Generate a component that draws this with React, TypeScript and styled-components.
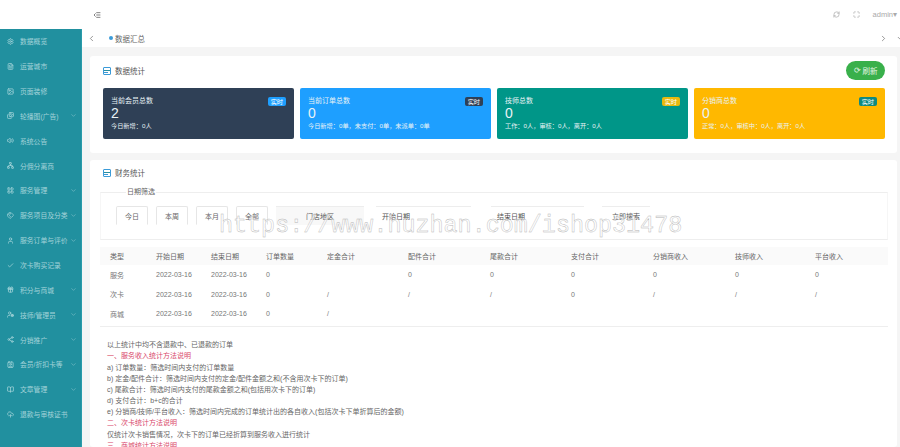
import React from "react";
import styled, { createGlobalStyle } from "styled-components";
import {
  ChevronDown,
  ChevronLeft,
  ChevronRight,
  Maximize,
  RefreshCw,
  Settings,
  FileText,
  Image,
  Images,
  Volume2,
  Network,
  LayoutGrid,
  Tags,
  User,
  Check,
  Gift,
  UserCog,
  Share2,
  Contact,
  BookOpen,
  CloudUpload,
  IndentDecrease,
} from "lucide-react";

const GlobalStyle = createGlobalStyle`
  html, body {
    margin: 0;
    padding: 0;
    background: #f5f5f5;
  }
  * {
    box-sizing: border-box;
  }
  body {
    font-family: "Liberation Sans", "Noto Sans CJK SC", sans-serif;
  }
`;

const menu = [
  { label: "数据概览", icon: Settings },
  { label: "运营城市", icon: FileText },
  { label: "页面装修", icon: Image },
  { label: "轮播图(广告)", icon: Images, arrow: true },
  { label: "系统公告", icon: Volume2 },
  { label: "分佣分离商", icon: Network },
  { label: "服务管理", icon: LayoutGrid, arrow: true },
  { label: "服务项目及分类", icon: Tags, arrow: true },
  { label: "服务订单与评价", icon: User, arrow: true },
  { label: "次卡购买记录", icon: Check },
  { label: "积分与商城", icon: Gift, arrow: true },
  { label: "技师/管理员", icon: UserCog, arrow: true },
  { label: "分销推广", icon: Share2, arrow: true },
  { label: "会员/折扣卡等", icon: Contact, arrow: true },
  { label: "文章管理", icon: BookOpen, arrow: true },
  { label: "退款与审核证书", icon: CloudUpload },
];

const stats = [
  { title: "当前会员总数", value: "2", sub: "今日新增：0人", bg: "#2f4056", tag: "实时", tagBg: "#1e9fff" },
  { title: "当前订单总数", value: "0", sub: "今日新增：0单，未支付：0单，未派单：0单", bg: "#1e9fff", tag: "实时", tagBg: "#2f4056" },
  { title: "技师总数", value: "0", sub: "工作：0人，审核：0人，离开：0人", bg: "#009688", tag: "实时", tagBg: "#e8b90e" },
  { title: "分销商总数", value: "0", sub: "正常：0人，审核中：0人，离开：0人", bg: "#ffb800", tag: "实时", tagBg: "#0d8a80" },
];

const columns = ["类型", "开始日期", "结束日期", "订单数量", "定金合计", "配件合计", "尾款合计", "支付合计", "分销商收入", "技师收入", "平台收入"];
const columnWidths = [46, 55, 55, 61, 81, 82, 81, 82, 82, 80, 83];

const rows = [
  ["服务", "2022-03-16", "2022-03-16", "0", "", "0", "0", "0", "0", "0", "0"],
  ["次卡", "2022-03-16", "2022-03-16", "0", "/", "/", "/", "0", "/", "/", "/"],
  ["商城", "2022-03-16", "2022-03-16", "0", "/", "", "", "", "", "", ""],
];

const notes: { text: string; red?: boolean }[] = [
  { text: "以上统计中均不含退款中、已退款的订单" },
  { text: "一、服务收入统计方法说明", red: true },
  { text: "a) 订单数量：筛选时间内支付的订单数量" },
  { text: "b) 定金/配件合计：筛选时间内支付的定金/配件金额之和(不含用次卡下的订单)" },
  { text: "c) 尾款合计：筛选时间内支付的尾款金额之和(包括用次卡下的订单)" },
  { text: "d) 支付合计：b+c的合计" },
  { text: "e) 分销商/技师/平台收入：筛选时间内完成的订单统计出的各自收入(包括次卡下单折算后的金额)" },
  { text: "二、次卡统计方法说明", red: true },
  { text: "仅统计次卡销售情况，次卡下的订单已经折算到服务收入进行统计" },
  { text: "三、商城统计方法说明", red: true },
];

const Page = styled.div`
  position: relative;
  display: flex;
  width: 900px;
  height: 447px;
  overflow: hidden;
`;

const Sidebar = styled.aside`
  flex: 0 0 82px;
  width: 82px;
  min-width: 0;
  display: flex;
  flex-direction: column;
`;

const Logo = styled.div`
  height: 29px;
  background: #fff;
`;

const Menu = styled.nav`
  flex: 1;
  background: #21909f;
  border-right: 1px solid #2a9cab;
`;

const MenuItem = styled.div`
  display: flex;
  align-items: center;
  height: 24.85px;
  padding: 0 4px 0 7px;
  color: #a3d3d9;
  font-size: 6.8px;
  white-space: nowrap;
  overflow: hidden;
`;

const MenuLabel = styled.span`
  flex: 1;
  min-width: 0;
  margin-left: 6px;
`;

const Main = styled.main`
  flex: 1;
  min-width: 0;
  display: flex;
  flex-direction: column;
`;

const Header = styled.header`
  display: flex;
  align-items: center;
  height: 29px;
  padding: 0 3px 0 11px;
  background: #fff;
  color: #8a8a8a;
`;

const HeaderRight = styled.div`
  display: flex;
  align-items: center;
  gap: 13px;
  margin-left: auto;
  font-size: 7.5px;
  color: #aaa;
`;

const Tabs = styled.div`
  display: flex;
  align-items: center;
  height: 18px;
  padding: 0 0 0 5px;
  background: #fff;
  color: #666;
  font-size: 7.5px;
`;

const Dot = styled.i`
  width: 4px;
  height: 4px;
  margin: 0 2px 0 13px;
  border-radius: 50%;
  background: #3b9bd8;
`;

const TabEnd = styled.div`
  display: flex;
  align-items: center;
  gap: 8px;
  margin-left: auto;
  margin-right: -5px;
`;

const Content = styled.div`
  flex: 1;
  min-height: 0;
  padding: 9px 3px 0 8px;
`;

const Card = styled.section`
  background: #fff;
  border-radius: 3px;
`;

const StatsCard = styled(Card)`
  height: 97px;
  padding: 5px 12px 0 13px;
  margin-bottom: 7px;
`;

const TitleRow = styled.div`
  display: flex;
  align-items: center;
  height: 19px;
  color: #555;
  font-size: 7.5px;
`;

const TitleText = styled.span`
  margin-left: 4px;
`;

const RefreshButton = styled.button`
  display: flex;
  align-items: center;
  justify-content: center;
  gap: 2px;
  width: 39px;
  height: 19px;
  margin-left: auto;
  padding: 0;
  border: 0;
  border-radius: 10px;
  background: #39b04b;
  color: #e4f5e6;
  font: inherit;
`;

const StatGrid = styled.div`
  display: grid;
  grid-template-columns: repeat(4, 1fr);
  gap: 6px;
  margin-top: 8px;
`;

const StatBox = styled.div<{ $bg: string }>`
  position: relative;
  height: 51px;
  padding: 8px 8px 0;
  border-radius: 2px;
  background: ${({ $bg }) => $bg};
  color: #e9f3f6;
  font-size: 7px;
`;

const StatTitle = styled.div`
  line-height: 10px;
`;

const StatValue = styled.div`
  font-size: 14px;
  line-height: 15px;
`;

const StatSub = styled.div`
  font-size: 6.2px;
  line-height: 9px;
`;

const Tag = styled.span<{ $bg: string }>`
  position: absolute;
  top: 9px;
  right: 8px;
  padding: 0 3px;
  border-radius: 2px;
  background: ${({ $bg }) => $bg};
  color: #fff;
  font-size: 6.2px;
  line-height: 9px;
`;

const FinanceCard = styled(Card)`
  height: 287px;
  padding: 3px 9px 0 10px;
`;

const FinanceTitle = styled(TitleRow)`
  margin-left: 3px;
`;

const Filter = styled.fieldset`
  display: flex;
  align-items: flex-start;
  height: 53px;
  margin: 5px 0 0;
  padding: 9px 0 0 15px;
  border: 1px solid #eee;
  border-right-color: #f6f6f6;
  border-left-color: #f6f6f6;
`;

const Legend = styled.legend`
  margin-left: 10px;
  padding: 0 1px;
  color: #666;
  font-size: 7px;
  line-height: 10px;
`;

const RangeButton = styled.button`
  width: 32px;
  height: 19px;
  margin-right: 8px;
  padding: 0;
  border: 1px solid #e6e6e6;
  border-bottom-color: #fff;
  border-radius: 2px 2px 0 0;
  background: #fff;
  color: #666;
  font: inherit;
  font-size: 7px;
`;

const Field = styled.div<{ $w: number; $gap: number; $bg?: string; $start?: boolean }>`
  display: flex;
  align-items: center;
  justify-content: ${({ $start }) => ($start ? "flex-start" : "center")};
  width: ${({ $w }) => $w}px;
  height: 19px;
  margin-right: ${({ $gap }) => $gap}px;
  padding-left: ${({ $start }) => ($start ? "6px" : "0")};
  border-top: 1px solid #ededed;
  background: ${({ $bg }) => $bg || "#fff"};
  color: #555;
  font-size: 7px;
`;

const StatTable = styled.table`
  width: 788px;
  margin-top: 7px;
  border-collapse: collapse;
  table-layout: fixed;
  color: #777;
  font-size: 7px;
`;

const HeadCell = styled.th`
  height: 18px;
  padding: 0 0 0 10px;
  background: #fafafa;
  color: #666;
  font-weight: 400;
  text-align: left;
`;

const Cell = styled.td`
  height: 19.6px;
  padding: 0 0 0 10px;
`;

const LastRow = styled.tr`
  border-bottom: 1px solid #eee;

  td {
    height: 22.6px;
    padding-bottom: 3px;
  }
`;

const Notes = styled.div`
  margin-top: 12px;
  padding-left: 7px;
  color: #666;
  font-size: 7px;
  line-height: 11.15px;
`;

const Note = styled.div<{ $red?: boolean }>`
  color: ${({ $red }) => ($red ? "#d9476a" : "#666")};
  white-space: nowrap;
`;

// the site's watermark, outlined text lying over the page
const Watermark = styled.div`
  position: absolute;
  left: 219px;
  top: 209px;
  color: rgba(255, 255, 255, 0.55);
  -webkit-text-stroke: 0.4px #b4b4b4;
  font-family: "Liberation Mono", monospace;
  font-size: 23.4px;
  line-height: 34px;
  white-space: nowrap;
  pointer-events: none;
`;

const BlockIcon = () => (
  <svg width="8" height="8" viewBox="0 0 8 8">
    <rect x="0.5" y="0.5" width="7" height="7" rx="0.5" fill="none" stroke="#3b9bd8" />
    <rect x="1" y="3" width="6" height="1" fill="#2a8f9f" />
    <rect x="1" y="5" width="4" height="1" fill="#3b9bd8" />
  </svg>
);

const App = () => {
  return (
    <Page>
      <GlobalStyle />
      <Sidebar>
        <Logo />
        <Menu>
          {menu.map(({ label, icon: Icon, arrow }) => (
            <MenuItem key={label}>
              <Icon size={7} strokeWidth={2.6} />
              <MenuLabel>{label}</MenuLabel>
              {arrow && <ChevronDown size={7} strokeWidth={1.5} />}
            </MenuItem>
          ))}
        </Menu>
      </Sidebar>
      <Main>
        <Header>
          <IndentDecrease size={8} strokeWidth={2.2} color="#555" />
          <HeaderRight>
            <RefreshCw size={7} strokeWidth={2.4} />
            <Maximize size={7} strokeWidth={2.4} />
            <span>admin▾</span>
          </HeaderRight>
        </Header>
        <Tabs>
          <ChevronLeft size={9} strokeWidth={1.6} color="#555" />
          <Dot />
          <span>数据汇总</span>
          <TabEnd>
            <ChevronRight size={9} strokeWidth={1.6} color="#555" />
            <ChevronDown size={9} strokeWidth={1.6} color="#555" />
          </TabEnd>
        </Tabs>
        <Content>
          <StatsCard>
            <TitleRow>
              <BlockIcon />
              <TitleText>数据统计</TitleText>
              <RefreshButton>
                <span>⟳</span>
                <span>刷新</span>
              </RefreshButton>
            </TitleRow>
            <StatGrid>
              {stats.map((s) => (
                <StatBox key={s.title} $bg={s.bg}>
                  <StatTitle>{s.title}</StatTitle>
                  <StatValue>{s.value}</StatValue>
                  <StatSub>{s.sub}</StatSub>
                  <Tag $bg={s.tagBg}>{s.tag}</Tag>
                </StatBox>
              ))}
            </StatGrid>
          </StatsCard>
          <FinanceCard>
            <FinanceTitle>
              <BlockIcon />
              <TitleText>财务统计</TitleText>
            </FinanceTitle>
            <Filter>
              <Legend>日期筛选</Legend>
              <RangeButton>今日</RangeButton>
              <RangeButton>本周</RangeButton>
              <RangeButton>本月</RangeButton>
              <RangeButton>全部</RangeButton>
              <Field $w={88} $gap={12} $bg="#f8f8f8">门店地区</Field>
              <Field $w={95} $gap={20} $start>开始日期</Field>
              <Field $w={93} $gap={18} $start>结束日期</Field>
              <Field $w={48} $gap={0}>立即搜索</Field>
            </Filter>
            <StatTable>
              <colgroup>
                {columnWidths.map((w, i) => (
                  <col key={i} style={{ width: w }} />
                ))}
              </colgroup>
              <thead>
                <tr>
                  {columns.map((c) => (
                    <HeadCell key={c}>{c}</HeadCell>
                  ))}
                </tr>
              </thead>
              <tbody>
                {rows.map((row, i) => {
                  const Row = i === rows.length - 1 ? LastRow : "tr";
                  return (
                    <Row key={row[0]}>
                      {row.map((v, j) => (
                        <Cell key={j}>{v}</Cell>
                      ))}
                    </Row>
                  );
                })}
              </tbody>
            </StatTable>
            <Notes>
              {notes.map((n) => (
                <Note key={n.text} $red={n.red}>
                  {n.text}
                </Note>
              ))}
            </Notes>
          </FinanceCard>
        </Content>
      </Main>
      <Watermark>https://www.huzhan.com/ishop31478</Watermark>
    </Page>
  );
};

export default App;
